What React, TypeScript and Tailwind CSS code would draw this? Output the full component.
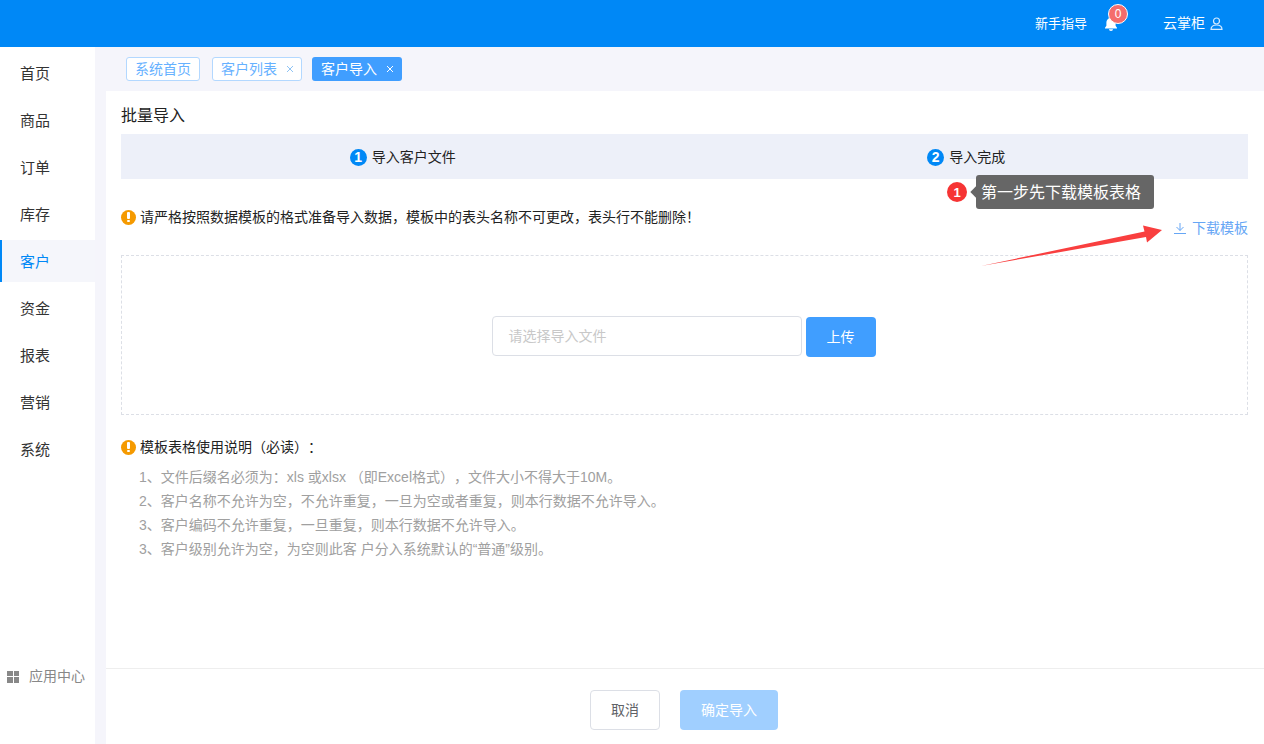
import React from "react";

const menu = ["首页", "商品", "订单", "库存", "客户", "资金", "报表", "营销", "系统"];
const notes = [
  "1、文件后缀名必须为：xls 或xlsx （即Excel格式），文件大小不得大于10M。",
  "2、客户名称不允许为空，不允许重复，一旦为空或者重复，则本行数据不允许导入。",
  "3、客户编码不允许重复，一旦重复，则本行数据不允许导入。",
  "3、客户级别允许为空，为空则此客 户分入系统默认的“普通”级别。",
];

function Close() {
  return (
    <svg width="8" height="8" viewBox="0 0 8 8" className="shrink-0" fill="none" stroke="currentColor" strokeWidth="1">
      <path d="M1 1l6 6M7 1L1 7" />
    </svg>
  );
}

function Warn() {
  return (
    <span className="flex h-[15px] w-[15px] shrink-0 items-center justify-center rounded-full bg-[#f59a00]">
      <span className="flex flex-col items-center gap-[1px]">
        <span className="h-[7px] w-[3px] rounded-[1px] bg-white" />
        <span className="h-[2px] w-[3px] rounded-[1px] bg-white" />
      </span>
    </span>
  );
}

function Step({ n, label }: { n: number; label: string }) {
  return (
    <div className="flex items-center justify-center gap-[5px] pt-[1px]">
      <span className="flex h-[17px] w-[17px] items-center justify-center rounded-full bg-[#0088f6] text-[14px] font-bold leading-none text-white">{n}</span>
      <span className="text-[14px] text-[#222]">{label}</span>
    </div>
  );
}

export default function App() {
  return (
    <div className="flex h-[744px] w-[1264px] flex-col overflow-hidden bg-[#f5f5fb] font-['Liberation_Sans','Noto_Sans_CJK_SC',sans-serif] text-[14px] [text-spacing-trim:space-all]">
      <header className="flex h-[47px] shrink-0 items-center justify-end bg-[#0088f6] text-white">
        <span className="text-[13px]">新手指导</span>
        <span className="relative ml-[16px] flex h-[16px] w-[16px] items-center justify-center">
          <svg width="16" height="16" viewBox="0 0 16 16" fill="#fff">
            <path d="M8 1c.6 0 1 .4 1 .9 2.300.5 3.600 2.300 3.600 4.600v3.300L14 11.800v.7H2v-.7l1.400-2V6.500C3.400 4.200 4.700 2.400 7 1.900 7 1.400 7.400 1 8 1z" />
            <path d="M6 13.300h4c0 1-.9 1.700-2 1.700s-2-.7-2-1.700z" />
          </svg>
          <span className="absolute left-[5px] top-[-12px] flex h-[20px] w-[20px] items-center justify-center rounded-full border border-white bg-[#f56c6c] text-[12px] leading-none">0</span>
        </span>
        <span className="ml-[44px] text-[14px]">云掌柜</span>
        <svg className="ml-[5px] mr-[41px]" width="13" height="13" viewBox="0 0 13 13" fill="none" stroke="#d5ebff" strokeWidth="1.200">
          <circle cx="6.500" cy="4" r="3" />
          <path d="M1 12.400c0-2.800 2.200-4.400 5.500-4.400s5.500 1.600 5.500 4.400z" />
        </svg>
      </header>

      <div className="flex min-h-0 flex-1">
        <aside className="flex w-[95px] shrink-0 flex-col bg-white pt-[5px]">
          <nav className="flex flex-1 flex-col gap-[5px]">
            {menu.map((m) => (
              <div
                key={m}
                className={
                  m === "客户"
                    ? "flex h-[42px] items-center border-l-[2px] border-[#0088f6] bg-[#f5f6fb] pl-[18px] pt-[2px] text-[15px] text-[#0088f6]"
                    : "flex h-[42px] items-center pl-[20px] pt-[2px] text-[15px] text-[#333]"
                }
              >
                {m}
              </div>
            ))}
          </nav>
          <div className="mb-[57px] flex items-center pl-[7px] text-[14px] text-[#888]">
            <span className="grid h-[12px] w-[12px] grid-cols-2 gap-[1px]">
              <i className="bg-[#888]" />
              <i className="bg-[#888]" />
              <i className="bg-[#888]" />
              <i className="bg-[#888]" />
            </span>
            <span className="ml-[10px]">应用中心</span>
          </div>
        </aside>

        <div className="ml-[11px] flex min-w-0 flex-1 flex-col">
          <div className="flex h-[44px] shrink-0 items-center pl-[20px] text-[14px]">
            <span className="flex h-[24px] w-[74px] items-center justify-center rounded-[3px] border border-[#b3d8ff] bg-white text-[#66b1ff]">系统首页</span>
            <span className="ml-[12px] flex h-[24px] w-[90px] items-center gap-[9px] rounded-[3px] border border-[#b3d8ff] bg-white pl-[8px] text-[#66b1ff]">
              客户列表
              <span className="text-[#8fc4f5]"><Close /></span>
            </span>
            <span className="ml-[10px] flex h-[24px] w-[90px] items-center gap-[9px] rounded-[3px] bg-[#409eff] pl-[9px] text-white">
              客户导入
              <Close />
            </span>
          </div>

          <main className="relative flex min-h-0 flex-1 flex-col bg-white">
            <div className="flex-1 px-[15px]">
              <h1 className="pt-[13px] text-[16px] leading-[24px] text-[#222]">批量导入</h1>
              <div className="mt-[6px] grid h-[45px] w-[1127px] grid-cols-2 bg-[#edf0f9]">
                <Step n={1} label="导入客户文件" />
                <Step n={2} label="导入完成" />
              </div>

              <div className="mt-[28px] flex h-[31px] w-[1127px] justify-between">
                <div className="flex h-[20px] items-center gap-[4px] whitespace-nowrap text-[14px] text-[#222]">
                  <Warn />
                  请严格按照数据模板的格式准备导入数据，模板中的表头名称不可更改，表头行不能删除！
                </div>
                <div className="flex items-end gap-[6px] pb-0 text-[14px] leading-[20px] text-[#66a6f5]">
                  <svg className="mb-[4px]" width="12" height="12" viewBox="0 0 12 12" fill="none" stroke="#66a6f5" strokeWidth="1">
                    <path d="M6 1v7.500M2.500 5L6 8.500 9.500 5M0 11.500h12" />
                  </svg>
                  下载模板
                </div>
              </div>

              <div className="mt-[17px] flex h-[160px] w-[1127px] items-center justify-center border border-dashed border-[#dcdfe6] pr-[2px] pt-[2px]">
                <div className="mr-[4px] flex h-[40px] w-[310px] items-center rounded-[4px] border border-[#dcdfe6] pl-[16px] text-[14px] text-[#c8c8c8]">请选择导入文件</div>
                <button className="mt-[2px] h-[40px] w-[70px] rounded-[4px] bg-[#409eff] text-[14px] text-white">上传</button>
              </div>

              <div className="mt-[22px] flex h-[20px] items-center gap-[4px] text-[14px] text-[#222]">
                <Warn />
                模板表格使用说明（必读）：
              </div>
              <ul className="mt-[8px] pl-[18px] text-[14px] leading-[24px] text-[#a0a0a0]">
                {notes.map((n, i) => (
                  <li key={i}>{n}</li>
                ))}
              </ul>
            </div>

            <footer className="flex h-[76px] shrink-0 items-start justify-center gap-[20px] border-t border-[#eeeeee] pr-[2px] pt-[21px]">
              <button className="h-[40px] w-[70px] rounded-[4px] border border-[#dcdfe6] bg-white text-[14px] text-[#606266]">取消</button>
              <button className="h-[40px] w-[98px] rounded-[4px] bg-[#a0cfff] text-[14px] text-white">确定导入</button>
            </footer>

            {/* annotation overlay */}
            <div className="absolute left-[841px] top-[84px] flex items-center">
              <span className="flex h-[20px] w-[20px] items-center justify-center rounded-full bg-[#f63434] text-[13px] font-bold leading-none text-white">1</span>
              <span className="relative ml-[9px] flex h-[34px] w-[178px] items-center rounded-[3px] bg-[#666666] pl-[5px] pt-[1px] text-[16px] text-white">
                <span className="absolute left-[-4px] top-[13px] h-[8px] w-[8px] rotate-45 bg-[#666666]" />
                <span className="relative">第一步先下载模板表格</span>
              </span>
            </div>
            <svg className="absolute left-[870px] top-[130px]" width="190" height="50" viewBox="0 0 190 50">
              <path d="M5 45L168.500 10.500 167 4.500 186 9 171 21.500 170 16z" fill="#f93f3f" />
            </svg>
          </main>
        </div>
      </div>
    </div>
  );
}
